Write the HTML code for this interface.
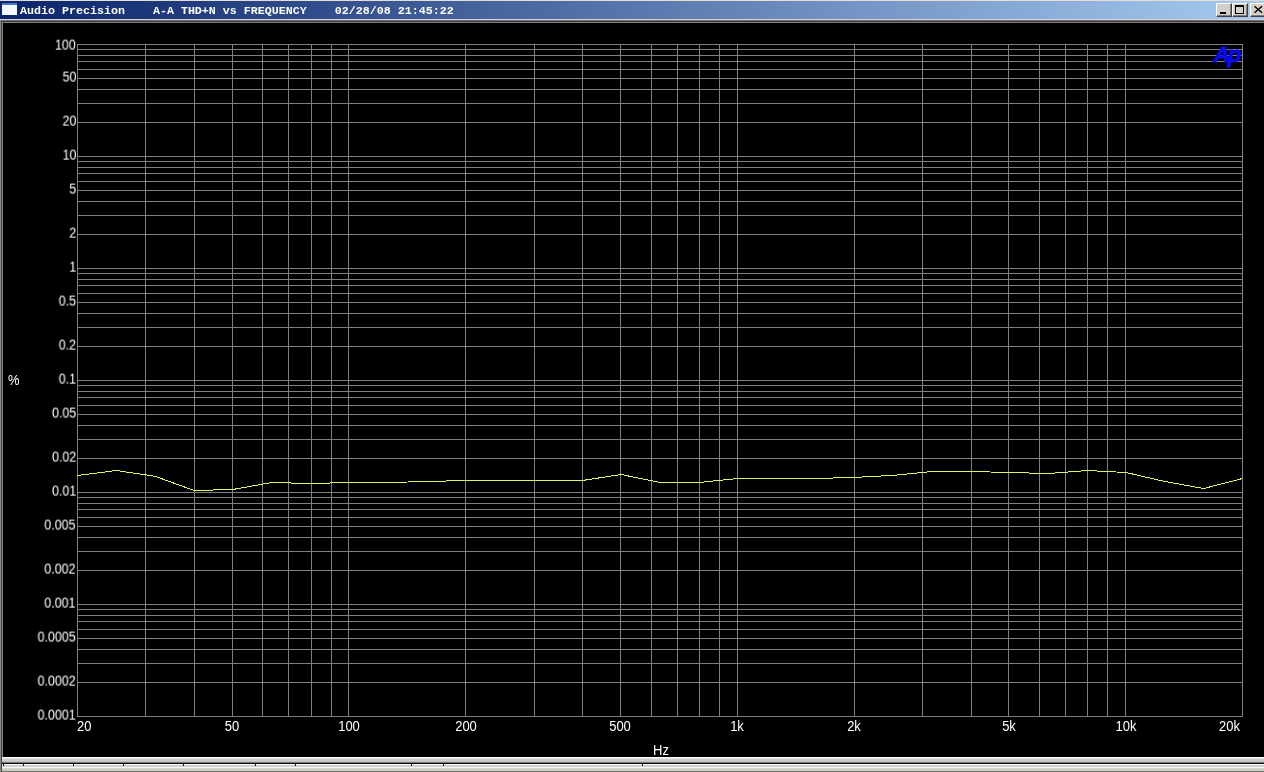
<!DOCTYPE html>
<html><head><meta charset="utf-8"><style>
html,body{margin:0;padding:0;}
body{width:1264px;height:772px;overflow:hidden;position:relative;background:#d4d0c8;font-family:"Liberation Sans",sans-serif;}
#top{position:absolute;left:0;top:0;width:1264px;height:1px;background:#e4e0d8;}
#tb{position:absolute;left:0;top:1px;width:1264px;height:18px;background:linear-gradient(to right,#0a246a 0%,#a6caf0 100%);}
#ico{position:absolute;left:2px;top:3px;width:15px;height:12px;background:#f4f8ff;}
#ico:before{content:"";position:absolute;left:0;top:0;width:15px;height:2px;background:#3a78d8;}
#tt{position:absolute;left:20px;top:3px;font-family:"Liberation Mono",monospace;font-weight:bold;font-size:11.67px;line-height:16px;color:#fff;white-space:pre;will-change:transform;}
.btn{position:absolute;top:3px;width:16px;height:14px;background:#d4d0c8;box-sizing:border-box;border-top:1px solid #fff;border-left:1px solid #fff;border-right:1px solid #404040;border-bottom:1px solid #404040;}
.btn:after{content:"";position:absolute;left:0;top:0;right:0;bottom:0;border-right:1px solid #808080;border-bottom:1px solid #808080;}
#client{position:absolute;left:0;top:19px;width:1264px;height:738px;background:#000;}
#fr1{position:absolute;left:0;top:19px;width:1264px;height:1px;background:#d4d2d8;}
#fr1c{position:absolute;left:0;top:20px;width:1264px;height:1px;background:#707078;}
#fr1b{position:absolute;left:0;top:20px;width:1px;height:752px;background:#8a8a8a;}
#fr2{position:absolute;left:1px;top:21px;width:1263px;height:1px;background:#3c3a3c;}
#fr2b{position:absolute;left:1px;top:21px;width:1px;height:751px;background:#424242;}
#fr3{position:absolute;left:2px;top:22px;width:1262px;height:1px;background:#807e78;}
#fr3b{position:absolute;left:2px;top:22px;width:1px;height:735px;background:#828282;}
svg{position:absolute;left:0;top:0;}
.yl{position:absolute;right:1188px;color:#fff;font-size:13px;line-height:16px;white-space:pre;transform:scale(0.96,1.11);transform-origin:100% 12.5px;will-change:transform;}
.xl{position:absolute;top:719px;color:#fff;font-size:13px;line-height:16px;white-space:pre;transform:scaleY(1.11);transform-origin:0 12.5px;will-change:transform;}
.xc{transform:translateX(-50%) scaleY(1.11);}
#pct{position:absolute;left:8px;top:373px;color:#fff;font-size:13px;line-height:16px;transform:scaleY(1.11);transform-origin:0 12.5px;will-change:transform;}
#hz{position:absolute;left:653px;top:743px;color:#fff;font-size:13px;line-height:16px;transform:scaleY(1.11);transform-origin:0 12.5px;will-change:transform;}
#logo{position:absolute;left:1212px;top:42px;color:#0000ff;font-size:19px;font-weight:bold;font-style:italic;line-height:20px;letter-spacing:-2px;}
#sb{position:absolute;left:2px;top:757px;width:1262px;height:15px;background:#d4d0c8;}
.sl{position:absolute;left:2px;width:1262px;height:1px;}
.sd{position:absolute;top:763px;width:1px;height:3px;background:#101010;}
</style></head><body>
<div id="top"></div>
<div id="tb"></div>
<div id="ico"></div>
<div id="tt">Audio&nbsp;Precision&nbsp;&nbsp;&nbsp;&nbsp;A-A&nbsp;THD+N&nbsp;vs&nbsp;FREQUENCY&nbsp;&nbsp;&nbsp;&nbsp;02/28/08&nbsp;21:45:22</div>
<div class="btn" style="left:1216px"><div style="position:absolute;left:3px;top:8px;width:6px;height:2px;background:#000"></div></div>
<div class="btn" style="left:1232px"><div style="position:absolute;left:2px;top:1px;width:9px;height:9px;box-sizing:border-box;border:1px solid #000;border-top-width:2px"></div></div>
<div class="btn" style="left:1250px"><svg width="14" height="12" style="left:0;top:0"><path d="M3.5 2.3 L11 8.7 M11 2.3 L3.5 8.7" stroke="#000" stroke-width="1.5"/></svg></div>
<div id="client"></div>
<div id="fr1"></div><div id="fr1c"></div><div id="fr1b"></div>
<div id="fr2"></div><div id="fr2b"></div>
<div id="fr3"></div><div id="fr3b"></div>
<svg width="1264" height="772" shape-rendering="crispEdges">
<g fill="#808080"><rect x="77" y="44" width="1166" height="1"/><rect x="77" y="49" width="1166" height="1"/><rect x="77" y="55" width="1166" height="1"/><rect x="77" y="61" width="1166" height="1"/><rect x="77" y="69" width="1166" height="1"/><rect x="77" y="78" width="1166" height="1"/><rect x="77" y="89" width="1166" height="1"/><rect x="77" y="103" width="1166" height="1"/><rect x="77" y="122" width="1166" height="1"/><rect x="77" y="156" width="1166" height="1"/><rect x="77" y="161" width="1166" height="1"/><rect x="77" y="167" width="1166" height="1"/><rect x="77" y="173" width="1166" height="1"/><rect x="77" y="181" width="1166" height="1"/><rect x="77" y="190" width="1166" height="1"/><rect x="77" y="201" width="1166" height="1"/><rect x="77" y="215" width="1166" height="1"/><rect x="77" y="234" width="1166" height="1"/><rect x="77" y="268" width="1166" height="1"/><rect x="77" y="273" width="1166" height="1"/><rect x="77" y="279" width="1166" height="1"/><rect x="77" y="285" width="1166" height="1"/><rect x="77" y="293" width="1166" height="1"/><rect x="77" y="302" width="1166" height="1"/><rect x="77" y="313" width="1166" height="1"/><rect x="77" y="327" width="1166" height="1"/><rect x="77" y="346" width="1166" height="1"/><rect x="77" y="380" width="1166" height="1"/><rect x="77" y="385" width="1166" height="1"/><rect x="77" y="391" width="1166" height="1"/><rect x="77" y="397" width="1166" height="1"/><rect x="77" y="405" width="1166" height="1"/><rect x="77" y="414" width="1166" height="1"/><rect x="77" y="425" width="1166" height="1"/><rect x="77" y="439" width="1166" height="1"/><rect x="77" y="458" width="1166" height="1"/><rect x="77" y="492" width="1166" height="1"/><rect x="77" y="497" width="1166" height="1"/><rect x="77" y="503" width="1166" height="1"/><rect x="77" y="509" width="1166" height="1"/><rect x="77" y="517" width="1166" height="1"/><rect x="77" y="526" width="1166" height="1"/><rect x="77" y="537" width="1166" height="1"/><rect x="77" y="551" width="1166" height="1"/><rect x="77" y="570" width="1166" height="1"/><rect x="77" y="604" width="1166" height="1"/><rect x="77" y="609" width="1166" height="1"/><rect x="77" y="615" width="1166" height="1"/><rect x="77" y="621" width="1166" height="1"/><rect x="77" y="629" width="1166" height="1"/><rect x="77" y="638" width="1166" height="1"/><rect x="77" y="649" width="1166" height="1"/><rect x="77" y="663" width="1166" height="1"/><rect x="77" y="682" width="1166" height="1"/><rect x="77" y="716" width="1166" height="1"/><rect x="77" y="44" width="1" height="673"/><rect x="145" y="44" width="1" height="673"/><rect x="194" y="44" width="1" height="673"/><rect x="232" y="44" width="1" height="673"/><rect x="262" y="44" width="1" height="673"/><rect x="288" y="44" width="1" height="673"/><rect x="311" y="44" width="1" height="673"/><rect x="331" y="44" width="1" height="673"/><rect x="348" y="44" width="1" height="673"/><rect x="465" y="44" width="1" height="673"/><rect x="534" y="44" width="1" height="673"/><rect x="582" y="44" width="1" height="673"/><rect x="620" y="44" width="1" height="673"/><rect x="651" y="44" width="1" height="673"/><rect x="677" y="44" width="1" height="673"/><rect x="699" y="44" width="1" height="673"/><rect x="719" y="44" width="1" height="673"/><rect x="737" y="44" width="1" height="673"/><rect x="854" y="44" width="1" height="673"/><rect x="922" y="44" width="1" height="673"/><rect x="971" y="44" width="1" height="673"/><rect x="1008" y="44" width="1" height="673"/><rect x="1039" y="44" width="1" height="673"/><rect x="1065" y="44" width="1" height="673"/><rect x="1087" y="44" width="1" height="673"/><rect x="1107" y="44" width="1" height="673"/><rect x="1125" y="44" width="1" height="673"/><rect x="1242" y="44" width="1" height="673"/></g>
</svg>
<svg width="1264" height="772"><text x="1213.5" y="62.3" font-family="Liberation Sans" font-weight="bold" font-style="italic" font-size="22.5" fill="#0a0af5" stroke="#0a0af5" stroke-width="0.9" letter-spacing="-2.2">Ap</text></svg>
<svg width="1264" height="772">
<polyline points="77.5,475.5 116.3,470.5 155.2,476.3 194.0,490.5 232.8,489.5 271.7,482.5 310.5,483.5 349.3,482.5 388.2,482.5 427.0,481.5 465.8,480.5 504.7,480.5 543.5,480.5 582.3,480.5 621.2,474.5 660.0,482.5 698.8,482.5 737.7,478.5 776.5,478.5 815.3,478.5 854.2,477.4 893.0,475.4 931.8,471.5 970.7,471.5 1009.5,472.5 1048.3,473.5 1087.2,470.5 1126.0,472.5 1164.8,481.5 1203.7,488.5 1242.5,478.5" fill="none" stroke="#e4f462" stroke-width="1" shape-rendering="crispEdges"/>
</svg>
<div class="yl" style="top:38px">100</div><div class="yl" style="top:70px">50</div><div class="yl" style="top:114px">20</div><div class="yl" style="top:148px">10</div><div class="yl" style="top:182px">5</div><div class="yl" style="top:226px">2</div><div class="yl" style="top:260px">1</div><div class="yl" style="top:294px">0.5</div><div class="yl" style="top:338px">0.2</div><div class="yl" style="top:372px">0.1</div><div class="yl" style="top:406px">0.05</div><div class="yl" style="top:450px">0.02</div><div class="yl" style="top:484px">0.01</div><div class="yl" style="top:518px">0.005</div><div class="yl" style="top:562px">0.002</div><div class="yl" style="top:596px">0.001</div><div class="yl" style="top:630px">0.0005</div><div class="yl" style="top:674px">0.0002</div><div class="yl" style="top:708px">0.0001</div>
<div class="xl" style="left:77px">20</div><div class="xl xc" style="left:232.0px">50</div><div class="xl xc" style="left:348.9px">100</div><div class="xl xc" style="left:465.8px">200</div><div class="xl xc" style="left:620.4px">500</div><div class="xl xc" style="left:737.3px">1k</div><div class="xl xc" style="left:854.2px">2k</div><div class="xl xc" style="left:1008.7px">5k</div><div class="xl xc" style="left:1125.6px">10k</div><div class="xl" style="right:24px">20k</div>
<div id="pct">%</div>
<div id="hz">Hz</div>
<div id="sb"></div><div class="sl" style="top:757px;background:#fafafa"></div><div class="sl" style="top:758px;background:#e6e6e4"></div><div class="sl" style="top:759px;background:#cfcdc9"></div><div class="sl" style="top:760px;background:#cfcdc9"></div><div class="sl" style="top:761px;background:#c4c2be"></div><div class="sl" style="top:762px;background:#787878"></div><div class="sl" style="top:763px;background:#0a0a0a"></div><div class="sl" style="top:764px;background:#fafafa"></div><div class="sl" style="top:765px;background:#cac8c4"></div><div class="sl" style="top:766px;background:#d6d4d0"></div><div class="sl" style="top:767px;background:#f5f5f3"></div><div class="sl" style="top:768px;background:#d6d3cc"></div><div class="sl" style="top:769px;background:#d2d0c8"></div><div class="sl" style="top:770px;background:#cac8c0"></div><div class="sl" style="top:771px;background:#7a7a7a"></div>
<div class="sd" style="left:3px"></div><div class="sd" style="left:23px"></div><div class="sd" style="left:73px"></div><div class="sd" style="left:123px"></div><div class="sd" style="left:183px"></div><div class="sd" style="left:255px"></div><div class="sd" style="left:295px"></div><div class="sd" style="left:411px"></div><div class="sd" style="left:443px"></div><div class="sd" style="left:642px"></div>
</body></html>
